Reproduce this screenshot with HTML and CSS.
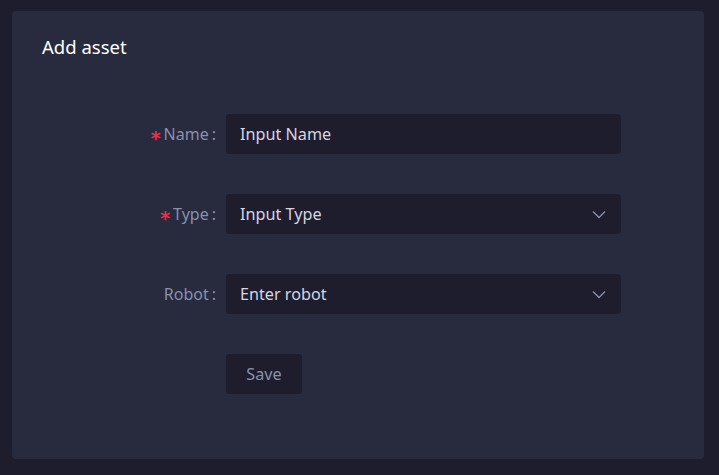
FILE: index.html
```html
<!DOCTYPE html>
<html>
<head>
<meta charset="utf-8">
<link rel="stylesheet" href="styles.css">
</head>
<body>
<div class="card">
  <h1 class="title">Add asset</h1>
  <form class="form">
    <div class="row">
      <label class="label"><span class="req">*</span>Name<span class="colon">:</span></label>
      <div class="field">Input Name</div>
    </div>
    <div class="row">
      <label class="label"><span class="req">*</span>Type<span class="colon">:</span></label>
      <div class="field select">Input Type
        <svg class="chev" width="14" height="9" viewBox="0 0 14 9"><path d="M1 1.5 L7 7.5 L13 1.5" fill="none" stroke="#8a90ab" stroke-width="1.3"/></svg>
      </div>
    </div>
    <div class="row">
      <label class="label">Robot<span class="colon">:</span></label>
      <div class="field select">Enter robot
        <svg class="chev" width="14" height="9" viewBox="0 0 14 9"><path d="M1 1.5 L7 7.5 L13 1.5" fill="none" stroke="#8a90ab" stroke-width="1.3"/></svg>
      </div>
    </div>
    <div class="row">
      <div class="label"></div>
      <button type="button" class="btn">Save</button>
    </div>
  </form>
</div>
</body>
</html>
```

FILE: styles.css
```css
html, body {
  margin: 0;
  padding: 0;
  background: #1e1d2e;
  width: 719px;
  height: 475px;
  overflow: hidden;
}
body {
  padding: 11px 15px 16px 12px;
  box-sizing: border-box;
  font-family: "Noto Sans", "Open Sans", sans-serif;
}
.card {
  background: #282a3d;
  border-radius: 4px;
  height: 448px;
  box-sizing: border-box;
  padding: 22px 30px;
}
.title {
  margin: 0;
  font-size: 18.5px;
  font-weight: 400;
  color: #ffffff;
  line-height: 28px;
}
.form {
  display: flex;
  flex-direction: column;
  gap: 40px;
  margin-top: 53px;
}
.row {
  display: flex;
  align-items: center;
  gap: 10px;
}
.label {
  width: 174px;
  color: #8790ae;
  font-size: 16px;
  flex: none;
  display: flex;
  justify-content: flex-end;
  align-items: center;
}
.req {
  color: #e8304a;
  margin-right: 3px;
  font-family: "DejaVu Sans", sans-serif;
  font-weight: 700;
  font-size: 19px;
  line-height: 1;
  padding-top: 8px;
}
.colon {
  margin-left: 3px;
}
.field {
  width: 395px;
  height: 40px;
  box-sizing: border-box;
  background: #1e1d2e;
  border-radius: 4px;
  padding: 0 14px;
  display: flex;
  align-items: center;
  color: #d4d6e0;
  font-size: 16.2px;
}
.select {
  justify-content: space-between;
}
.chev {
  margin-right: 1px;
}
.btn {
  width: 76px;
  height: 40px;
  border: none;
  border-radius: 4px;
  background: #1e1d2e;
  color: #8a91b0;
  font-family: inherit;
  font-size: 16.2px;
  padding: 0;
}
```
